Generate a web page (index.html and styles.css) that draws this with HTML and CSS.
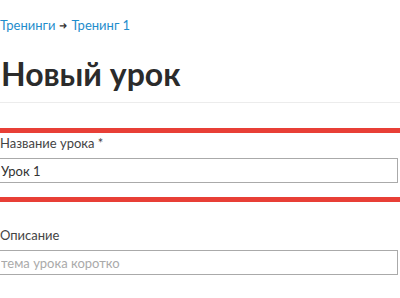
FILE: index.html
```html
<!DOCTYPE html>
<html lang="ru">
<head>
<meta charset="utf-8">
<link rel="stylesheet" href="styles.css">
</head>
<body>
<div class="page">
  <nav class="crumbs"><a class="crumb" href="#">Тренинги</a><span class="sep">➜</span><a class="crumb" href="#">Тренинг 1</a></nav>
  <h1 class="title">Новый урок</h1>
  <div class="divider"></div>
  <div class="field field-hl">
    <label class="label">Название урока *</label>
    <input class="input" type="text" value="Урок 1">
  </div>
  <div class="field">
    <label class="label">Описание</label>
    <input class="input" type="text" placeholder="тема урока коротко">
  </div>
</div>
</body>
</html>
```
FILE: styles.css
```css
html, body { margin: 0; padding: 0; background: #fff; }
body { font-family: Lato, "Open Sans", sans-serif; color: #333; overflow: hidden; }
.page { width: 400px; }
.crumbs { display: flex; align-items: center; gap: 4px; padding-top: 17px; font-size: 13px; line-height: 16px; }
.crumb { color: #1f8dcc; text-decoration: none; }
.sep { color: #333; font-size: 10px; }
.title { margin: 21px 0 0 1px; font-size: 32px; font-weight: 700; line-height: 40px; color: #2b2b2b; }
.divider { margin-top: 8px; height: 1px; background: #ececec; }
.field { display: flex; flex-direction: column; }
.field-hl { margin-top: 25px; border-top: 5px solid #e83f36; border-bottom: 5px solid #e83f36; padding: 3px 0 14px; }
.field + .field { margin-top: 26px; }
.label { font-size: 13px; line-height: 15px; color: #444; }
.input { box-sizing: border-box; height: 25px; width: 398px; margin-top: 7px; border: 1px solid #aaa; border-left: none; padding: 0 8px 0 1px; font-family: inherit; font-size: 13px; color: #333; background: #fff; outline: none; }
.input::placeholder { color: #aaa; }
.field + .field .input { margin-top: 7px; }
```
